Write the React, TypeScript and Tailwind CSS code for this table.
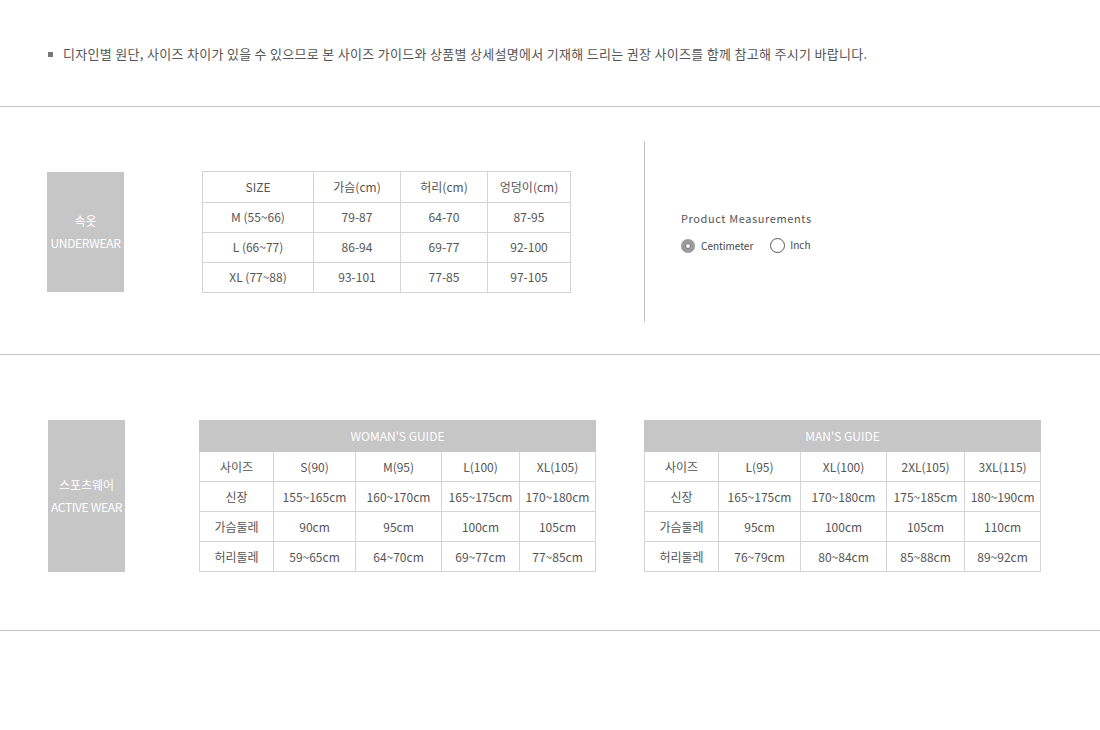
import React from 'react';

const font = { fontFamily: '"Noto Sans CJK KR", "Noto Sans", sans-serif' };

const underwear = [
  ['SIZE', '가슴(cm)', '허리(cm)', '엉덩이(cm)'],
  ['M (55~66)', '79-87', '64-70', '87-95'],
  ['L (66~77)', '86-94', '69-77', '92-100'],
  ['XL (77~88)', '93-101', '77-85', '97-105'],
];

const woman = [
  ['사이즈', 'S(90)', 'M(95)', 'L(100)', 'XL(105)'],
  ['신장', '155~165cm', '160~170cm', '165~175cm', '170~180cm'],
  ['가슴둘레', '90cm', '95cm', '100cm', '105cm'],
  ['허리둘레', '59~65cm', '64~70cm', '69~77cm', '77~85cm'],
];

const man = [
  ['사이즈', 'L(95)', 'XL(100)', '2XL(105)', '3XL(115)'],
  ['신장', '165~175cm', '170~180cm', '175~185cm', '180~190cm'],
  ['가슴둘레', '95cm', '100cm', '105cm', '110cm'],
  ['허리둘레', '76~79cm', '80~84cm', '85~88cm', '89~92cm'],
];

const CategoryBox = ({ ko, en, h }: { ko: string; en: string; h: string }) => (
  <div className={`w-[77px] ${h} bg-[#c6c6c6] flex flex-col items-center justify-center text-white text-[12px] leading-[22px] shrink-0`}>
    <span>{ko}</span>
    <span className="tracking-[-0.3px]">{en}</span>
  </div>
);

const GuideTable = ({ title, rows }: { title: string; rows: string[][] }) => (
  <table className="border-collapse table-fixed w-[396px] text-[12px] text-[#555]">
    <colgroup>
      <col className="w-[74px]" />
      <col className="w-[82px]" />
      <col className="w-[86px]" />
      <col className="w-[78px]" />
      <col className="w-[76px]" />
    </colgroup>
    <thead>
      <tr>
        <th colSpan={5} className="h-[31px] bg-[#c6c6c6] border border-[#c6c6c6] text-white font-normal">
          {title}
        </th>
      </tr>
    </thead>
    <tbody>
      {rows.map((r, i) => (
        <tr key={i}>
          {r.map((c, j) => (
            <td key={j} className="h-[30px] border border-[#d4d4d4] text-center p-0 whitespace-nowrap">
              {c}
            </td>
          ))}
        </tr>
      ))}
    </tbody>
  </table>
);

export default function App() {
  return (
    <div className="w-[1100px] min-h-[730px] bg-white" style={font}>
      <div className="h-[106px] flex items-center pl-[48px] pt-[2px] text-[13px] text-[#555]">
        <span className="w-[5px] h-[5px] bg-[#777] mr-[10px]" />
        <span className="tracking-[0.3px]">디자인별 원단, 사이즈 차이가 있을 수 있으므로 본 사이즈 가이드와 상품별 상세설명에서 기재해 드리는 권장 사이즈를 함께 참고해 주시기 바랍니다.</span>
      </div>
      <div className="border-t border-[#c4c4c4]" />

      <div className="flex items-center pt-[34px] pb-[32px] pl-[47px]">
        <CategoryBox ko="속옷" en="UNDERWEAR" h="h-[120px]" />
        <table className="ml-[78px] border-collapse table-fixed w-[368px] text-[12px] text-[#555]">
          <colgroup>
            <col className="w-[111px]" />
            <col className="w-[87px]" />
            <col className="w-[87px]" />
            <col className="w-[83px]" />
          </colgroup>
          <tbody>
            {underwear.map((r, i) => (
              <tr key={i}>
                {r.map((c, j) => (
                  <td key={j} className={`${i === 0 ? 'h-[31px]' : 'h-[30px]'} border border-[#d4d4d4] text-center p-0`}>
                    {c}
                  </td>
                ))}
              </tr>
            ))}
          </tbody>
        </table>
        <div className="ml-[73px] w-px h-[181px] bg-[#c4c4c4]" />
        <div className="ml-[36px]">
          <div className="text-[11px] tracking-[0.6px] text-[#555]">Product Measurements</div>
          <div className="flex items-center mt-[12px] text-[10px] text-[#444]">
            <span className="w-[14px] h-[14px] rounded-full bg-[#9a9a9a] flex items-center justify-center">
              <span className="w-[6px] h-[6px] rounded-full bg-white border border-[#777]" />
            </span>
            <span className="ml-[6px]">Centimeter</span>
            <span className="ml-[17px] w-[15px] h-[15px] rounded-full border border-[#555]" />
            <span className="ml-[5px] -mt-[2px]">Inch</span>
          </div>
        </div>
      </div>
      <div className="border-t border-[#c4c4c4]" />

      <div className="flex items-start pt-[65px] pb-[58px] pl-[48px]">
        <CategoryBox ko="스포츠웨어" en="ACTIVE WEAR" h="h-[152px]" />
        <div className="ml-[74px]">
          <GuideTable title="WOMAN'S GUIDE" rows={woman} />
        </div>
        <div className="ml-[48px]">
          <GuideTable title="MAN'S GUIDE" rows={man} />
        </div>
      </div>
      <div className="border-t border-[#c4c4c4]" />
    </div>
  );
}
